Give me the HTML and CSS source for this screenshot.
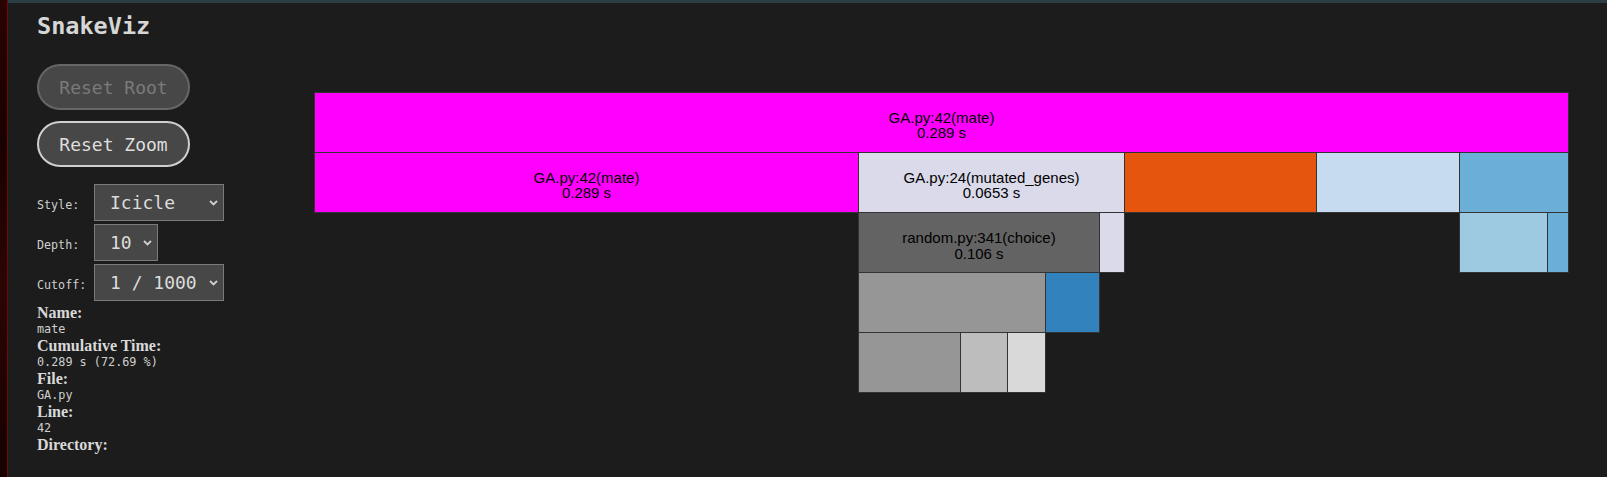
FILE: index.html
```html
<!DOCTYPE html>
<html lang="en">
<head>
<meta charset="utf-8">
<title>SnakeViz</title>
<link rel="stylesheet" href="styles.css">
</head>
<body>
<div class="page">
  <div class="edge"></div>
  <div class="content">
    <div class="topbar"></div>
    <div class="main">
      <aside class="sidebar">
        <h1 class="title">SnakeViz</h1>
        <div class="buttons">
          <button class="btn btn-disabled" disabled>Reset Root</button>
          <button class="btn">Reset Zoom</button>
        </div>
        <div class="controls">
          <label class="ctl-label" for="sv-style">Style:</label>
          <div class="sel-wrap sel-wide">
            <select id="sv-style" class="sel"><option>Icicle</option><option>Sunburst</option></select>
            <svg class="chev" width="9" height="6" viewBox="0 0 9 6"><path d="M1 1 L4.5 4.5 L8 1" fill="none" stroke="#cfcfcf" stroke-width="1.8"/></svg>
          </div>
          <label class="ctl-label" for="sv-depth">Depth:</label>
          <div class="sel-wrap sel-narrow">
            <select id="sv-depth" class="sel"><option>10</option></select>
            <svg class="chev" width="9" height="6" viewBox="0 0 9 6"><path d="M1 1 L4.5 4.5 L8 1" fill="none" stroke="#cfcfcf" stroke-width="1.8"/></svg>
          </div>
          <label class="ctl-label" for="sv-cutoff">Cutoff:</label>
          <div class="sel-wrap sel-wide">
            <select id="sv-cutoff" class="sel"><option>1 / 1000</option></select>
            <svg class="chev" width="9" height="6" viewBox="0 0 9 6"><path d="M1 1 L4.5 4.5 L8 1" fill="none" stroke="#cfcfcf" stroke-width="1.8"/></svg>
          </div>
        </div>
        <div class="info">
          <div class="info-label">Name:</div>
          <div class="info-value">mate</div>
          <div class="info-label">Cumulative Time:</div>
          <div class="info-value">0.289 s (72.69 %)</div>
          <div class="info-label">File:</div>
          <div class="info-value">GA.py</div>
          <div class="info-label">Line:</div>
          <div class="info-value">42</div>
          <div class="info-label">Directory:</div>
        </div>
      </aside>
      <section class="chart">
        <svg class="icicle" width="1256" height="302" viewBox="0 0 1256 302">
          <g class="cells">
            <rect x="0.5" y="0.5" width="1254" height="60" fill="#ff00ff"/>
            <rect x="0.5" y="60.5" width="544" height="60" fill="#ff00ff"/>
            <rect x="544.5" y="60.5" width="266" height="60" fill="#dadaeb"/>
            <rect x="810.5" y="60.5" width="192" height="60" fill="#e6550d"/>
            <rect x="1002.5" y="60.5" width="143" height="60" fill="#c6dbef"/>
            <rect x="1145.5" y="60.5" width="109" height="60" fill="#6baed6"/>
            <rect x="544.5" y="120.5" width="241" height="60" fill="#636363"/>
            <rect x="785.5" y="120.5" width="25" height="60" fill="#dadaeb"/>
            <rect x="1145.5" y="120.5" width="88" height="60" fill="#9ecae1"/>
            <rect x="1233.5" y="120.5" width="21" height="60" fill="#6baed6"/>
            <rect x="544.5" y="180.5" width="187" height="60" fill="#969696"/>
            <rect x="731.5" y="180.5" width="54" height="60" fill="#3182bd"/>
            <rect x="544.5" y="240.5" width="102" height="60" fill="#969696"/>
            <rect x="646.5" y="240.5" width="47" height="60" fill="#bdbdbd"/>
            <rect x="693.5" y="240.5" width="38" height="60" fill="#d9d9d9"/>
          </g>
          <g class="labels">
            <text x="627.5" y="30.5">GA.py:42(mate)</text>
            <text x="627.5" y="46">0.289 s</text>
            <text x="272.5" y="90.5">GA.py:42(mate)</text>
            <text x="272.5" y="106">0.289 s</text>
            <text x="677.5" y="90.5">GA.py:24(mutated_genes)</text>
            <text x="677.5" y="106">0.0653 s</text>
            <text x="665" y="151">random.py:341(choice)</text>
            <text x="665" y="166.5">0.106 s</text>
          </g>
        </svg>
      </section>
    </div>
  </div>
</div>
</body>
</html>
```

FILE: styles.css
```css
html, body {
  margin: 0;
  padding: 0;
  height: 477px;
  overflow: hidden;
  background: #1c1c1c;
}

.page {
  display: flex;
  height: 477px;
}

.edge {
  width: 7px;
  flex: 0 0 7px;
  background: linear-gradient(180deg, #2a0303 0%, #1a0101 30%, #2c0505 60%, #160101 100%);
  border-right: 1px solid #6a0b0b;
}

.content {
  flex: 1;
  display: flex;
  flex-direction: column;
  min-width: 0;
}

.topbar {
  height: 3px;
  background: #2b3e43;
}

.main {
  display: flex;
  flex: 1;
}

.sidebar {
  width: 277px;
  flex: 0 0 277px;
  padding-left: 29px;
  display: flex;
  flex-direction: column;
  align-items: flex-start;
}

.title {
  margin: 9px 0 0 0;
  font-family: "DejaVu Sans Mono", monospace;
  font-weight: bold;
  font-size: 23.5px;
  line-height: 28px;
  color: #d6d6d6;
}

.buttons {
  margin-top: 24px;
  display: flex;
  flex-direction: column;
  gap: 11px;
}

.btn {
  box-sizing: border-box;
  width: 153px;
  height: 46px;
  border-radius: 23px;
  background: #474747;
  border: 2px solid #cfcfcf;
  color: #dedede;
  font-family: "DejaVu Sans Mono", monospace;
  font-size: 18px;
  padding: 0;
  text-align: center;
}

.btn-disabled {
  border-color: #666666;
  color: #7a7a7a;
}

.controls {
  margin-top: 17px;
  display: grid;
  grid-template-columns: 57px auto;
  row-gap: 3px;
  align-items: baseline;
  justify-items: start;
}

.ctl-label {
  font-family: "DejaVu Sans Mono", monospace;
  font-size: 11.7px;
  color: #cfcfcf;
}

.sel-wrap {
  position: relative;
  display: inline-block;
}

.sel-wide { width: 130px; }
.sel-narrow { width: 64px; }

.sel {
  box-sizing: border-box;
  width: 100%;
  height: 37px;
  appearance: none;
  -webkit-appearance: none;
  background: #474747;
  border: 1px solid #7a7a7a;
  border-radius: 0;
  color: #dcdcdc;
  font-family: "DejaVu Sans Mono", monospace;
  font-size: 18px;
  padding: 0 0 0 15px;
  margin: 0;
}

.chev {
  position: absolute;
  right: 6px;
  top: 16px;
  pointer-events: none;
}

.info {
  margin-top: 3px;
  display: flex;
  flex-direction: column;
}

.info-label {
  font-family: "Liberation Serif", serif;
  font-weight: bold;
  font-size: 16px;
  line-height: 17px;
  color: #d8d8d8;
}

.info-value {
  font-family: "DejaVu Sans Mono", monospace;
  font-size: 11.8px;
  line-height: 16px;
  color: #cfcfcf;
}

.chart {
  flex: 1;
}

.icicle {
  display: block;
  margin-top: 89px;
}

.cells rect {
  stroke: #333333;
  stroke-width: 1;
}

.labels text {
  font-family: "Liberation Sans", Arial, sans-serif;
  font-size: 15px;
  fill: #000000;
  text-anchor: middle;
}
```
